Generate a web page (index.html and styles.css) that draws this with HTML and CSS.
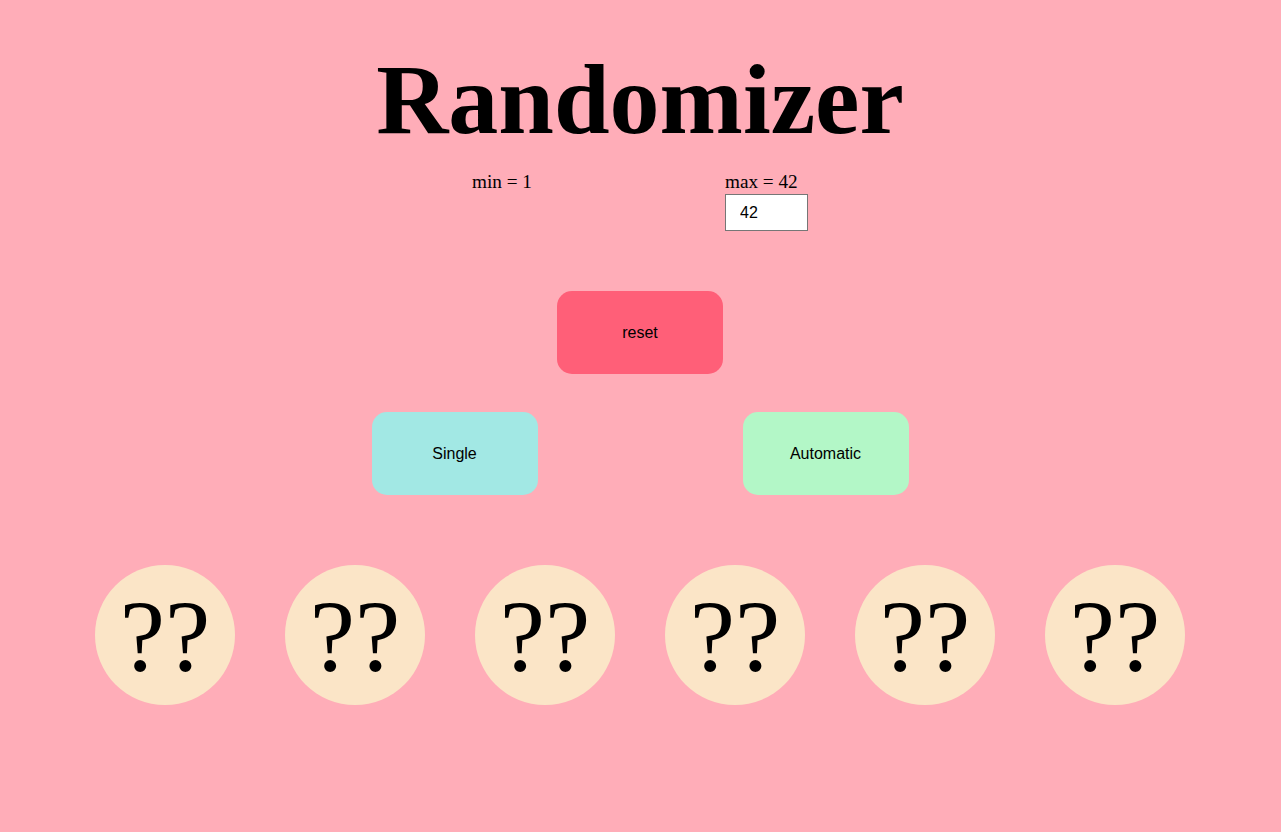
FILE: index.html
```html
<!DOCTYPE html>
<html>
<head>
<meta charset="utf-8">
<link rel="stylesheet" href="styles.css">
</head>
<body>
<div class="page">
<h1 class="title">Randomizer</h1>
<div class="limits">
  <div class="limit limit-min">min = 1</div>
  <div class="limit limit-max">max = 42<br><input class="max-input" type="number" value="42"></div>
</div>
<div class="reset-row"><button class="btn btn-reset">reset</button></div>
<div class="mode-row">
  <button class="btn btn-single">Single</button>
  <button class="btn btn-auto">Automatic</button>
</div>
<div class="balls">
  <div class="ball">??</div>
  <div class="ball">??</div>
  <div class="ball">??</div>
  <div class="ball">??</div>
  <div class="ball">??</div>
  <div class="ball">??</div>
</div>
</div>
</body>
</html>
```
FILE: styles.css
```css
html, body {
  margin: 0;
  padding: 0;
}
body {
  background: #ffadb8;
  font-family: "Liberation Serif", "Times New Roman", serif;
  color: #000;
  height: 832px;
}
.page {
  width: 1280px;
}
.title {
  margin: 0;
  padding-top: 42px;
  font-size: 100px;
  line-height: 115px;
  text-align: center;
  font-weight: bold;
}
.limits {
  display: flex;
  justify-content: center;
  margin-top: 14px;
  font-size: 19.2px;
  line-height: 22px;
}
.limit-min {
  width: 253px;
}
.limit-max {
  width: 83px;
  white-space: nowrap;
}
.max-input {
  width: 83px;
  height: 37px;
  box-sizing: border-box;
  border: 1px solid #767676;
  padding: 0 0 0 14px;
  font-family: "Liberation Sans", Arial, sans-serif;
  font-size: 16px;
  margin: 1px 0 0 0;
  background: #fff;
  -moz-appearance: textfield;
}
.max-input::-webkit-inner-spin-button,
.max-input::-webkit-outer-spin-button {
  -webkit-appearance: none;
  margin: 0;
}
.reset-row {
  display: flex;
  justify-content: center;
  margin-top: 60px;
}
.btn {
  width: 166px;
  height: 83px;
  border: none;
  border-radius: 15px;
  font-family: "Liberation Sans", Arial, sans-serif;
  font-size: 16px;
  color: #000;
  padding: 0;
}
.btn-reset {
  background: #ff5f78;
}
.mode-row {
  display: flex;
  justify-content: center;
  gap: 205px;
  margin-top: 38px;
}
.btn-single {
  background: #a2e8e4;
}
.btn-auto {
  background: #b3f7c7;
}
.balls {
  display: flex;
  justify-content: center;
  gap: 50px;
  margin-top: 70px;
}
.ball {
  width: 140px;
  height: 140px;
  border-radius: 50%;
  background: #fbe5c7;
  display: flex;
  align-items: center;
  justify-content: center;
  font-size: 102px;
  line-height: 1;
  padding-top: 4px;
  box-sizing: border-box;
}
```
